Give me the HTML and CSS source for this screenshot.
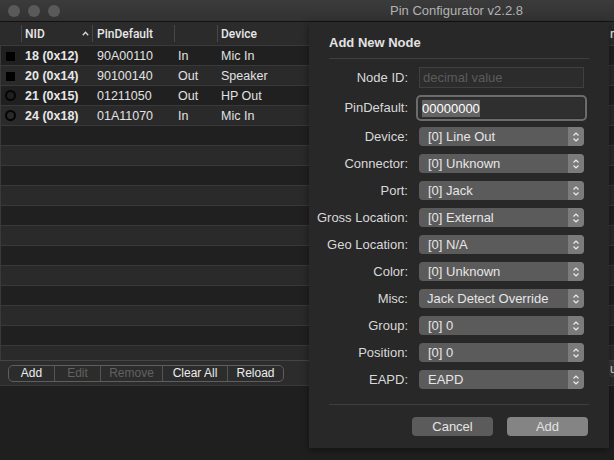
FILE: index.html
```html
<!DOCTYPE html>
<html>
<head>
<meta charset="utf-8">
<title>Pin Configurator</title>
<link rel="stylesheet" href="styles.css">
</head>
<body>
<div class="window">
  <div class="titlebar">
    <div class="lights"><span class="light"></span><span class="light"></span><span class="light"></span></div>
    <div class="title">Pin Configurator v2.2.8</div>
  </div>

  <div class="table">
    <div class="thead">
      <div class="th"></div>
      <div class="th th-nid"><span>NID</span><svg class="sort" width="7" height="5" viewBox="0 0 7 5"><path d="M0.8 4.2 L3.5 1.3 L6.2 4.2" fill="none" stroke="#d8d8d8" stroke-width="1.3"/></svg></div>
      <div class="th">PinDefault</div>
      <div class="th"></div>
      <div class="th">Device</div>
      <div class="th">misc</div>
    </div>
    <div class="tbody">
      <div class="tr dark"><div class="td icon"><span class="sq"></span></div><div class="td nid">18 (0x12)</div><div class="td">90A00110</div><div class="td">In</div><div class="td">Mic In</div><div class="td"></div></div>
      <div class="tr"><div class="td icon"><span class="sq"></span></div><div class="td nid">20 (0x14)</div><div class="td">90100140</div><div class="td">Out</div><div class="td">Speaker</div><div class="td"></div></div>
      <div class="tr dark"><div class="td icon"><span class="ring"></span></div><div class="td nid">21 (0x15)</div><div class="td">01211050</div><div class="td">Out</div><div class="td">HP Out</div><div class="td"></div></div>
      <div class="tr"><div class="td icon"><span class="ring"></span></div><div class="td nid">24 (0x18)</div><div class="td">01A11070</div><div class="td">In</div><div class="td">Mic In</div><div class="td"></div></div>
      <div class="tr dark"></div>
      <div class="tr"></div>
      <div class="tr dark"></div>
      <div class="tr"></div>
      <div class="tr dark"></div>
      <div class="tr"></div>
      <div class="tr dark"></div>
      <div class="tr"></div>
      <div class="tr dark"></div>
      <div class="tr"></div>
      <div class="tr dark"></div>
      <div class="tr"></div>
    </div>
  </div>

  <div class="toolbar">
    <div class="segmented">
      <span class="seg seg-add">Add</span>
      <span class="seg seg-edit off">Edit</span>
      <span class="seg seg-remove off">Remove</span>
      <span class="seg seg-clear">Clear All</span>
      <span class="seg seg-reload">Reload</span>
    </div>
    <div class="tool-right">u</div>
  </div>

  <div class="sheet">
    <div class="sheet-title">Add New Node</div>
    <div class="sep"></div>
    <div class="form">
      <div class="label">Node ID:</div>
      <div class="field placeholder">decimal value</div>

      <div class="label">PinDefault:</div>
      <div class="field focused"><span class="selected">00000000</span></div>

      <div class="label">Device:</div>
      <div class="select"><span class="sel-text">[0] Line Out</span><span class="stepper"><svg width="8" height="12" viewBox="0 0 8 12"><path d="M1.5 4.5 L4 2 L6.5 4.5 M1.5 7.5 L4 10 L6.5 7.5" fill="none" stroke="#ececec" stroke-width="1.2"/></svg></span></div>

      <div class="label">Connector:</div>
      <div class="select"><span class="sel-text">[0] Unknown</span><span class="stepper"><svg width="8" height="12" viewBox="0 0 8 12"><path d="M1.5 4.5 L4 2 L6.5 4.5 M1.5 7.5 L4 10 L6.5 7.5" fill="none" stroke="#ececec" stroke-width="1.2"/></svg></span></div>

      <div class="label">Port:</div>
      <div class="select"><span class="sel-text">[0] Jack</span><span class="stepper"><svg width="8" height="12" viewBox="0 0 8 12"><path d="M1.5 4.5 L4 2 L6.5 4.5 M1.5 7.5 L4 10 L6.5 7.5" fill="none" stroke="#ececec" stroke-width="1.2"/></svg></span></div>

      <div class="label">Gross Location:</div>
      <div class="select"><span class="sel-text">[0] External</span><span class="stepper"><svg width="8" height="12" viewBox="0 0 8 12"><path d="M1.5 4.5 L4 2 L6.5 4.5 M1.5 7.5 L4 10 L6.5 7.5" fill="none" stroke="#ececec" stroke-width="1.2"/></svg></span></div>

      <div class="label">Geo Location:</div>
      <div class="select"><span class="sel-text">[0] N/A</span><span class="stepper"><svg width="8" height="12" viewBox="0 0 8 12"><path d="M1.5 4.5 L4 2 L6.5 4.5 M1.5 7.5 L4 10 L6.5 7.5" fill="none" stroke="#ececec" stroke-width="1.2"/></svg></span></div>

      <div class="label">Color:</div>
      <div class="select"><span class="sel-text">[0] Unknown</span><span class="stepper"><svg width="8" height="12" viewBox="0 0 8 12"><path d="M1.5 4.5 L4 2 L6.5 4.5 M1.5 7.5 L4 10 L6.5 7.5" fill="none" stroke="#ececec" stroke-width="1.2"/></svg></span></div>

      <div class="label">Misc:</div>
      <div class="select"><span class="sel-text misc">Jack Detect Override</span><span class="stepper"><svg width="8" height="12" viewBox="0 0 8 12"><path d="M1.5 4.5 L4 2 L6.5 4.5 M1.5 7.5 L4 10 L6.5 7.5" fill="none" stroke="#ececec" stroke-width="1.2"/></svg></span></div>

      <div class="label">Group:</div>
      <div class="select"><span class="sel-text">[0] 0</span><span class="stepper"><svg width="8" height="12" viewBox="0 0 8 12"><path d="M1.5 4.5 L4 2 L6.5 4.5 M1.5 7.5 L4 10 L6.5 7.5" fill="none" stroke="#ececec" stroke-width="1.2"/></svg></span></div>

      <div class="label">Position:</div>
      <div class="select"><span class="sel-text">[0] 0</span><span class="stepper"><svg width="8" height="12" viewBox="0 0 8 12"><path d="M1.5 4.5 L4 2 L6.5 4.5 M1.5 7.5 L4 10 L6.5 7.5" fill="none" stroke="#ececec" stroke-width="1.2"/></svg></span></div>

      <div class="label">EAPD:</div>
      <div class="select"><span class="sel-text">EAPD</span><span class="stepper"><svg width="8" height="12" viewBox="0 0 8 12"><path d="M1.5 4.5 L4 2 L6.5 4.5 M1.5 7.5 L4 10 L6.5 7.5" fill="none" stroke="#ececec" stroke-width="1.2"/></svg></span></div>
    </div>
    <div class="sep sep-bottom"></div>
    <div class="actions">
      <div class="btn cancel">Cancel</div>
      <div class="btn add">Add</div>
    </div>
  </div>
</div>
</body>
</html>
```

FILE: styles.css
```css
* { box-sizing: border-box; margin: 0; padding: 0; }

body {
  margin: 0;
  background: #1f1f1f;
  font-family: "Liberation Sans", Arial, sans-serif;
}

.window {
  width: 614px;
  height: 460px;
  position: relative;
  overflow: hidden;
  background: #1f1f1f;
  display: flex;
  flex-direction: column;
}

/* title bar */
.titlebar {
  height: 22px;
  flex: none;
  background: linear-gradient(#3b3b3b, #323232);
  border-bottom: 1px solid #121212;
  display: flex;
  align-items: center;
  padding-left: 8px;
}
.lights { display: flex; gap: 8px; flex: none; }
.light {
  width: 12px;
  height: 12px;
  border-radius: 50%;
  background: #5a5a5a;
}
.title {
  margin-left: 330px;
  font-size: 13px;
  color: #b2b2b2;
  white-space: nowrap;
}

/* table */
.table {
  width: 614px;
  overflow: hidden;
  flex: none;
}
.thead, .tr {
  display: grid;
  grid-template-columns: 21px 71px 82px 43px 388px 120px;
  width: 725px;
}
.thead {
  height: 24px;
  background: #2b2b2b;
  border-bottom: 1px solid #3a3a3a;
}
.th {
  display: flex;
  align-items: center;
  padding-left: 5px;
  font-family: Roboto, "Liberation Sans", Arial, sans-serif;
  font-size: 12px;
  font-weight: 500;
  color: #e8e8e8;
  white-space: nowrap;
}
.th + .th {
  background: linear-gradient(#474747, #474747) no-repeat left center / 1px 17px;
}
.th:nth-child(2), .th:nth-child(4), .th:nth-child(5) { padding-left: 4px; }
.th-nid { justify-content: space-between; padding-right: 3px; }
.sort { display: block; }

.tbody {
  height: 314px;
  overflow: hidden;
  border-left: 1px solid #3a3a3a;
}
.tr {
  height: 20px;
  background: #2a2a2a;
  border-bottom: 1px solid #393939;
  margin-left: -1px;
}
.tr.dark { background: #202020; }
.td {
  display: flex;
  align-items: center;
  padding-left: 4px;
  font-size: 12.5px;
  color: #e2e2e2;
  white-space: nowrap;
}
.td:nth-child(3) { padding-left: 5px; }
.td.nid { font-weight: bold; color: #e8e8e8; }
.td.icon { padding-left: 0; justify-content: center; padding-right: 1px; }
.sq {
  width: 9px;
  height: 9px;
  background: #000;
  margin-top: 1px;
}
.ring {
  width: 11px;
  height: 11px;
  border-radius: 50%;
  border: 2.5px solid #050505;
}

/* toolbar */
.toolbar {
  height: 26px;
  flex: none;
  background: #2c2c2c;
  border-top: 1px solid #454545;
  border-bottom: 1px solid #3a3a3a;
  display: flex;
  align-items: center;
  padding-left: 8px;
}
.segmented {
  display: flex;
  height: 17px;
  border: 1px solid #5e5e5e;
  border-radius: 5px;
  overflow: hidden;
}
.seg {
  display: flex;
  align-items: center;
  justify-content: center;
  font-size: 12px;
  color: #ececec;
  white-space: nowrap;
}
.seg + .seg { border-left: 1px solid #555; }
.seg.off { color: #616161; }
.seg-add { width: 45px; }
.seg-edit { width: 46px; }
.seg-remove { width: 62px; }
.seg-clear { width: 65px; }
.seg-reload { width: 56px; }
.tool-right {
  margin-left: auto;
  margin-right: -40px;
  width: 45px;
  height: 16px;
  align-self: flex-start;
  background: #3a3a3a;
  font-size: 12px;
  color: #e0e0e0;
  padding-left: 1px;
  line-height: 16px;
}

/* sheet dialog */
.sheet {
  position: absolute;
  left: 309px;
  top: 22px;
  width: 300px;
  height: 426px;
  background: #282828;
  padding: 13px 20px 0;
  box-shadow: 0 2px 8px rgba(0, 0, 0, 0.45);
}
.sheet-title {
  font-size: 13px;
  font-weight: bold;
  color: #e2e2e2;
  line-height: 16px;
  height: 16px;
}
.sep {
  height: 1px;
  background: #3f3f3f;
  margin-top: 7px;
}
.form {
  margin-left: -20px;
  margin-top: 8px;
  display: grid;
  grid-template-columns: 99px 165px;
  column-gap: 11px;
  row-gap: 8px;
  align-items: center;
}
.label {
  text-align: right;
  font-size: 13px;
  color: #d9d9d9;
  white-space: nowrap;
}
.field {
  font-size: 13px;
  white-space: nowrap;
  display: flex;
  align-items: center;
}
.field.placeholder {
  height: 21px;
  background: #2c2c2c;
  border: 1px solid #404040;
  padding-left: 3px;
  color: #5b5b5b;
}
.field.focused {
  height: 20px;
  margin: 2px 0 1px;
  background: #2f2f2f;
  border-radius: 2px;
  box-shadow: 0 0 0 1px #2a2a2a, 0 0 0 3px #6c6c6c;
  padding-left: 3px;
}
.selected {
  background: #646464;
  color: #ffffff;
  line-height: 17px;
}
.select {
  height: 19px;
  background: #5b5b5b;
  border-radius: 4px;
  display: flex;
  overflow: hidden;
}
.sel-text {
  flex: 1;
  padding-left: 9px;
  font-size: 13px;
  line-height: 19px;
  color: #e6e6e6;
  white-space: nowrap;
}
.sel-text.misc { padding-left: 8px; }
.stepper {
  width: 16px;
  background: #7b7b7b;
  display: flex;
  align-items: center;
  justify-content: center;
}
.sep-bottom { margin-top: 15px; }
.actions {
  margin-top: 12px;
  display: flex;
  justify-content: flex-end;
  gap: 14px;
  padding-right: 1px;
}
.btn {
  width: 81px;
  height: 19px;
  border-radius: 4px;
  font-size: 13px;
  display: flex;
  align-items: center;
  justify-content: center;
}
.btn.cancel { background: #5b5b5b; color: #e6e6e6; }
.btn.add { background: #848484; color: #e2e2e2; }
```
